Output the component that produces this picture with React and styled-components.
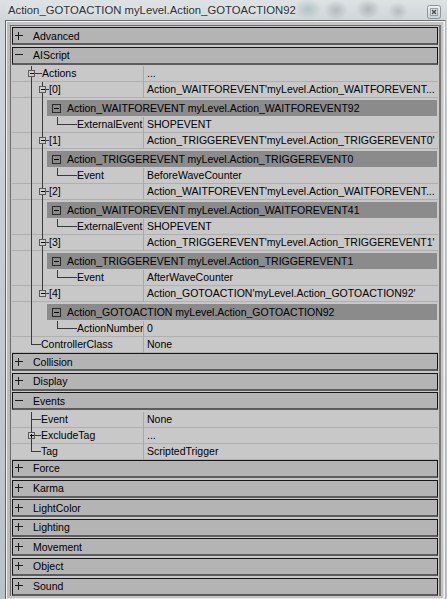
import React from 'react'
import styled, { createGlobalStyle } from 'styled-components'

const GlobalStyle = createGlobalStyle`
    html, body {
        margin: 0;
        padding: 0;
    }
    body {
        font-family: 'Liberation Sans', Arial, sans-serif;
    }
`

// tree guide positions, relative to the row's left edge
const L1 = 19.5
const L2 = 30.5
const L3 = 45.5

const Window = styled.div`
    width: 447px;
    height: 599px;
    display: flex;
    flex-direction: column;
    overflow: hidden;
    background:
        radial-gradient(ellipse 14px 10px at 308px 9px, rgba(70, 120, 120, 0.25), transparent),
        radial-gradient(ellipse 12px 10px at 336px 10px, rgba(60, 66, 70, 0.22), transparent),
        radial-gradient(ellipse 12px 10px at 368px 9px, rgba(60, 66, 70, 0.25), transparent),
        radial-gradient(ellipse 10px 9px at 398px 11px, rgba(60, 66, 70, 0.2), transparent),
        linear-gradient(to bottom, #dde2e4 0px, #d0d6d9 20px, #b9c2c7 100%);
`

const TitleBar = styled.div`
    height: 20px;
    flex-shrink: 0;
    display: flex;
    align-items: center;
    padding: 0 6px 0 8px;
`

const TitleText = styled.div`
    flex: 1;
    font-size: 11.3px;
    color: #2c3134;
    white-space: nowrap;
    text-shadow: 0 0 6px rgba(255, 255, 255, 0.9);
`

const CloseButton = styled.div`
    width: 14px;
    height: 14px;
    margin-top: 3px;
    svg {
        display: block;
    }
`

const Frame = styled.div`
    flex: 1;
    min-height: 0;
    margin: 0 1px 0 5px;
    display: flex;
    border-left: 1px solid #5d6367;
    border-top: 1px solid #6a7074;
    border-right: 1px solid #b2b8bc;
    padding: 1px 1px 0;
    background: #f2f2f2;
`

const Inner = styled.div`
    flex: 1;
    display: flex;
    padding: 3px 3px 3px 3px;
    background: linear-gradient(to right, #bcbcbc 0 3px, transparent 3px), #c4c4c4;
    box-shadow: inset -1px 0 0 #dcdcdc, inset 0 -1px 0 #e6e6e6;
`

const Panel = styled.div`
    flex: 1;
    min-width: 0;
    display: flex;
    flex-direction: column;
    overflow: hidden;
    background: #c8c8c8;
    border-left: 1px solid #6c6c6c;
    border-top: 1px solid #6c6c6c;
    border-right: 2px solid #767676;
    padding: 1px 1px 0 1px;
`

const CategoryBar = styled.div`
    height: 18px;
    flex-shrink: 0;
    box-sizing: border-box;
    margin-bottom: 1.6px;
    display: flex;
    align-items: center;
    background: #b4b4b4;
    border: 1px solid #161616;
    border-bottom: 2px solid #5c5c5c;
    font-size: 10.5px;
    color: #000;

    svg {
        display: block;
        margin: 0 10px 0 2px;
        flex-shrink: 0;
    }
`

const Row = styled.div`
    display: flex;
    height: 16px;
    flex-shrink: 0;
    background: linear-gradient(to top, #afafaf 1px, transparent 1px);
    font-size: 10.5px;
    color: #000;
`

const NameCell = styled.div`
    width: 131px;
    flex-shrink: 0;
    display: flex;
    overflow: hidden;

    svg {
        display: block;
        flex-shrink: 0;
    }
`

const NameText = styled.span`
    line-height: 15px;
    white-space: nowrap;
`

const ValueCell = styled.div`
    flex: 1;
    min-width: 0;
    border-left: 1px solid #a8a8a8;
    padding-left: 3px;
    line-height: 15px;
    white-space: nowrap;
    overflow: hidden;
`

const HeaderRow = styled.div`
    display: flex;
    height: 19px;
    flex-shrink: 0;

    & > svg {
        display: block;
        flex-shrink: 0;
    }
`

const HeaderBar = styled.div`
    flex: 1;
    min-width: 0;
    margin: 2px 1px 1px 0;
    display: flex;
    align-items: center;
    padding-left: 5px;
    background: #8b8b8b;
    font-size: 10.5px;
    color: #000;
    white-space: nowrap;
    overflow: hidden;

    svg {
        display: block;
        margin-right: 6px;
        flex-shrink: 0;
    }
`

const LINE = '#3a3a3a'

const Tree = ({ width, height = 16, marks = [] }) => {
    const cy = 7.5
    return (
        <svg width={width} height={height} style={{ overflow: 'visible' }}>
            {marks.map((m, i) => (
                <g key={i} stroke={LINE} strokeWidth="1" shapeRendering="crispEdges">
                    {(m.type === 'pipe' || m.type === 'tee') && <line x1={m.x} x2={m.x} y1={0} y2={height} />}
                    {m.type === 'elbow' && <line x1={m.x} x2={m.x} y1={0} y2={cy} />}
                    {m.to && <line x1={m.x} x2={m.to} y1={cy} y2={cy} />}
                    {m.box && (
                        <>
                            <rect x={m.x - 3} y={cy - 3} width="6" height="6" fill="#cdcdcd" stroke="#5a5a5a" />
                            <line x1={m.x - 2} x2={m.x + 2} y1={cy} y2={cy} stroke="#000" />
                            {m.box === 'plus' && <line x1={m.x} x2={m.x} y1={cy - 2} y2={cy + 2} stroke="#000" />}
                        </>
                    )}
                </g>
            ))}
        </svg>
    )
}

const Sign = ({ open }) => (
    <svg width="8" height="8" shapeRendering="crispEdges">
        <line x1="0" x2="8" y1="3.5" y2="3.5" stroke="#1c1c1c" />
        {!open && <line x1="3.5" x2="3.5" y1="0" y2="8" stroke="#1c1c1c" />}
    </svg>
)

const BoxSign = () => (
    <svg width="9" height="9" shapeRendering="crispEdges">
        <rect x="0.5" y="0.5" width="8" height="8" fill="none" stroke="#2a2a2a" />
        <line x1="2" x2="7" y1="4.5" y2="4.5" stroke="#000" />
    </svg>
)

const Category = ({ name, open }) => (
    <CategoryBar>
        <Sign open={open} />
        {name}
    </CategoryBar>
)

const PropRow = ({ name, value, tx, marks }) => (
    <Row>
        <NameCell>
            <Tree width={tx} marks={marks} />
            <NameText>{name}</NameText>
        </NameCell>
        <ValueCell>{value}</ValueCell>
    </Row>
)

const ObjHeader = ({ label, marks }) => (
    <HeaderRow>
        <Tree width={35} height={19} marks={marks} />
        <HeaderBar>
            <BoxSign />
            {label}
        </HeaderBar>
    </HeaderRow>
)

const p1 = { x: L1, type: 'pipe' }
const p2 = { x: L2, type: 'pipe' }

const item = (idx, value, last) => ({
    kind: 'prop',
    name: `[${idx}]`,
    value,
    tx: 37,
    marks: [p1, { x: L2, type: last ? 'elbow' : 'tee', box: 'minus', to: 36.5 }],
})

const child = (name, value, last) => ({
    kind: 'prop',
    name,
    value,
    tx: 65,
    marks: last ? [p1, { x: L3, type: 'elbow', to: 64.5 }] : [p1, p2, { x: L3, type: 'elbow', to: 64.5 }],
})

const head = (label, last) => ({ kind: 'head', label, marks: last ? [p1] : [p1, p2] })

const aiRows = [
    { kind: 'prop', name: 'Actions', value: '...', tx: 30, marks: [{ x: L1, type: 'tee', box: 'minus', to: 29.5 }] },
    item(0, "Action_WAITFOREVENT'myLevel.Action_WAITFOREVENT..."),
    head('Action_WAITFOREVENT myLevel.Action_WAITFOREVENT92'),
    child('ExternalEvent', 'SHOPEVENT'),
    item(1, "Action_TRIGGEREVENT'myLevel.Action_TRIGGEREVENT0'"),
    head('Action_TRIGGEREVENT myLevel.Action_TRIGGEREVENT0'),
    child('Event', 'BeforeWaveCounter'),
    item(2, "Action_WAITFOREVENT'myLevel.Action_WAITFOREVENT..."),
    head('Action_WAITFOREVENT myLevel.Action_WAITFOREVENT41'),
    child('ExternalEvent', 'SHOPEVENT'),
    item(3, "Action_TRIGGEREVENT'myLevel.Action_TRIGGEREVENT1'"),
    head('Action_TRIGGEREVENT myLevel.Action_TRIGGEREVENT1'),
    child('Event', 'AfterWaveCounter'),
    item(4, "Action_GOTOACTION'myLevel.Action_GOTOACTION92'", true),
    head('Action_GOTOACTION myLevel.Action_GOTOACTION92', true),
    child('ActionNumber', '0', true),
    { kind: 'prop', name: 'ControllerClass', value: 'None', tx: 29, marks: [{ x: L1, type: 'elbow', to: 28.5 }] },
]

const eventRows = [
    { kind: 'prop', name: 'Event', value: 'None', tx: 29, marks: [{ x: L1, type: 'tee', to: 28.5 }] },
    { kind: 'prop', name: 'ExcludeTag', value: '...', tx: 29, marks: [{ x: L1, type: 'tee', box: 'plus', to: 28.5 }] },
    { kind: 'prop', name: 'Tag', value: 'ScriptedTrigger', tx: 29, marks: [{ x: L1, type: 'elbow', to: 28.5 }] },
]

const sections = [
    { name: 'Advanced' },
    { name: 'AIScript', rows: aiRows },
    { name: 'Collision' },
    { name: 'Display' },
    { name: 'Events', rows: eventRows },
    { name: 'Force' },
    { name: 'Karma' },
    { name: 'LightColor' },
    { name: 'Lighting' },
    { name: 'Movement' },
    { name: 'Object' },
    { name: 'Sound' },
]

const Rows = ({ rows }) =>
    rows.map((r, i) =>
        r.kind === 'head' ? (
            <ObjHeader key={i} label={r.label} marks={r.marks} />
        ) : (
            <PropRow key={i} name={r.name} value={r.value} tx={r.tx} marks={r.marks} />
        )
    )

const App = () => (
    <>
        <GlobalStyle />
        <Window>
            <TitleBar>
                <TitleText>Action_GOTOACTION myLevel.Action_GOTOACTION92</TitleText>
                <CloseButton>
                    <svg width="14" height="14">
                        <defs>
                            <linearGradient id="cb" x1="0" y1="0" x2="0" y2="1">
                                <stop offset="0" stopColor="#eef1f3" />
                                <stop offset="1" stopColor="#c9d0d4" />
                            </linearGradient>
                        </defs>
                        <rect x="0.5" y="0.5" width="13" height="13" rx="2" fill="url(#cb)" stroke="#8c959a" />
                        <rect x="3.5" y="3.5" width="7" height="7" fill="#dfe4e6" stroke="#9aa2a7" />
                        <path d="M5 5 L9 9 M9 5 L5 9" stroke="#3c4448" strokeWidth="1.3" />
                    </svg>
                </CloseButton>
            </TitleBar>
            <Frame>
                <Inner>
                    <Panel>
                        {sections.map(s => (
                            <React.Fragment key={s.name}>
                                <Category name={s.name} open={!!s.rows} />
                                {s.rows && <Rows rows={s.rows} />}
                            </React.Fragment>
                        ))}
                    </Panel>
                </Inner>
            </Frame>
        </Window>
    </>
)

export default App
